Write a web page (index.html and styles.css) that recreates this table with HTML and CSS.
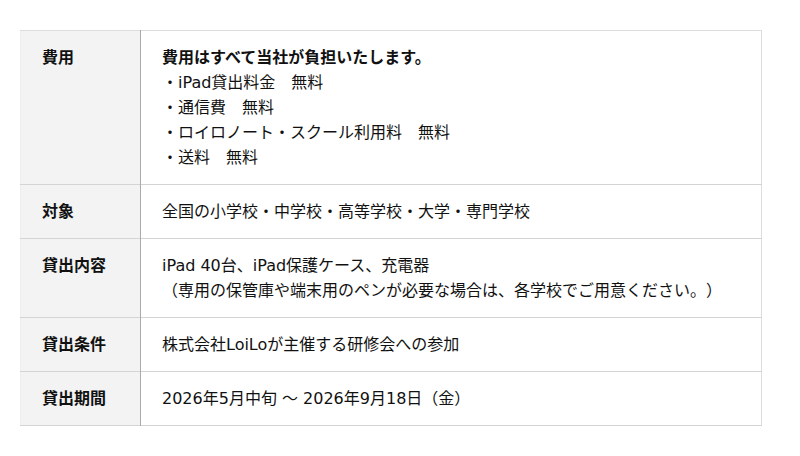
FILE: index.html
```html
<!DOCTYPE html>
<html lang="ja">
<head>
<meta charset="utf-8">
<link rel="stylesheet" href="styles.css">
</head>
<body>
<div class="page">
  <table class="info">
    <tr>
      <th>費用</th>
      <td><strong>費用はすべて当社が負担いたします。</strong><br>・iPad貸出料金　無料<br>・通信費　無料<br>・ロイロノート・スクール利用料　無料<br>・送料　無料</td>
    </tr>
    <tr>
      <th>対象</th>
      <td>全国の小学校・中学校・高等学校・大学・専門学校</td>
    </tr>
    <tr>
      <th>貸出内容</th>
      <td>iPad 40台、iPad保護ケース、充電器<br>（専用の保管庫や端末用のペンが必要な場合は、各学校でご用意ください。）</td>
    </tr>
    <tr>
      <th>貸出条件</th>
      <td>株式会社LoiLoが主催する研修会への参加</td>
    </tr>
    <tr>
      <th>貸出期間</th>
      <td>2026年5月中旬 ～ 2026年9月18日（金）</td>
    </tr>
  </table>
</div>
</body>
</html>
```

FILE: styles.css
```css
html, body {
  margin: 0;
  padding: 0;
  background: #fff;
}
.page {
  padding: 30px 38px 30px 20px;
  font-family: "DejaVu Sans", "Noto Sans CJK JP", sans-serif;
  font-size: 16px;
  color: #111;
  text-spacing-trim: space-all;
}
.info {
  width: 742px;
  border-collapse: collapse;
  border-top: 1px solid #ddd;
  border-right: 1px solid #ddd;
  border-left: 1px solid #eee;
}
.info tr {
  border-bottom: 1px solid #d4d4d4;
}
.info th,
.info td {
  text-align: left;
  vertical-align: top;
  line-height: 25px;
  padding: 14px 21px;
}
.info th {
  width: 120px;
  box-sizing: border-box;
  background: #f3f3f3;
  border-right: 1px solid #aaa;
  font-weight: bold;
}
.info td strong {
  font-weight: bold;
}
```
